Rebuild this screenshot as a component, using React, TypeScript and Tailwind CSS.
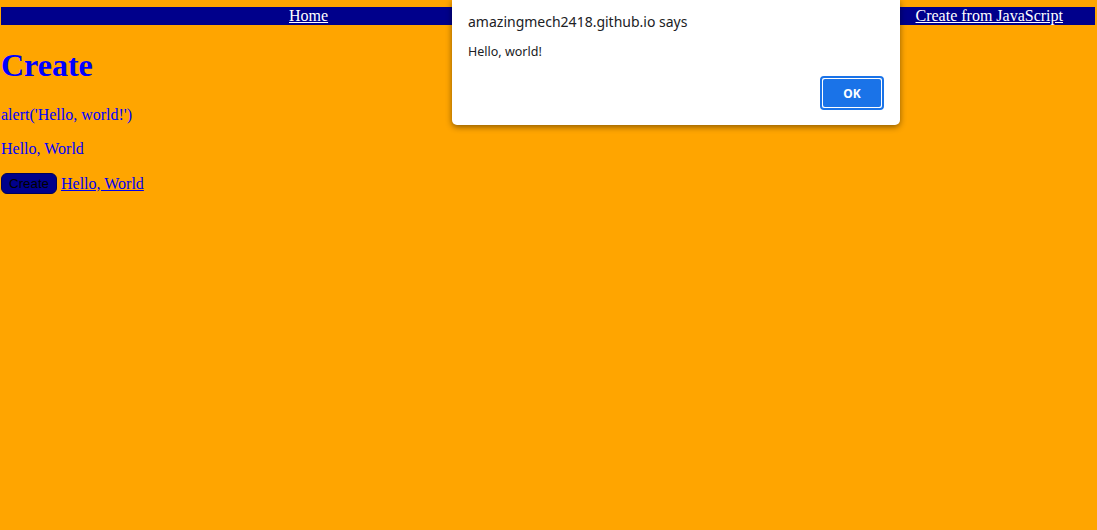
import React from 'react';

export default function App() {
  return (
    <div className="relative min-h-[530px] bg-[#ffa500] pl-px pr-[2px] pt-[7px] font-['Liberation_Serif',serif] text-[16px] leading-[normal]">
      {/* nav bar */}
      <nav className="flex h-[18px] items-center bg-[#00008b] text-white">
        <a href="#" className="ml-[288px] underline">Home</a>
        <a href="#" className="ml-auto mr-[32px] underline">Create from JavaScript</a>
      </nav>

      <h1 className="mt-[22px] text-[32px] font-bold text-[#0000ff]">Create</h1>
      <p className="mt-[22px] text-[#0000ff]">alert('Hello, world!')</p>
      <p className="mt-4 text-[#0000ff]">Hello, World</p>
      <div className="mt-[15px] flex items-center gap-1">
        <button className="h-[21px] rounded-[6px] border border-[#00005a] bg-[#00008b] px-[7px] font-['Liberation_Sans',sans-serif] text-[13.33px] text-black">
          Create
        </button>
        <a href="#" className="text-[#0000ee] underline">Hello, World</a>
      </div>

      {/* alert dialog */}
      <div className="absolute left-[452px] top-0 h-[125px] w-[448px] rounded-b-[5px] bg-white px-4 font-['Noto_Sans',sans-serif] text-[#202124] shadow-[0_2px_6px_rgba(0,0,0,0.45)]">
        <div className="pt-[12px] text-[14px]">amazingmech2418.github.io says</div>
        <div className="mt-[12px] text-[12.5px]">Hello, world!</div>
        <div className="mt-[16px] flex justify-end">
          <button className="h-[34px] w-[64px] rounded-[4px] border-2 border-[#1a73e8] p-px">
            <span className="flex h-full w-full items-center justify-center rounded-[2px] bg-[#1a73e8] text-[12px] font-bold text-white">
              OK
            </span>
          </button>
        </div>
      </div>
    </div>
  );
}
